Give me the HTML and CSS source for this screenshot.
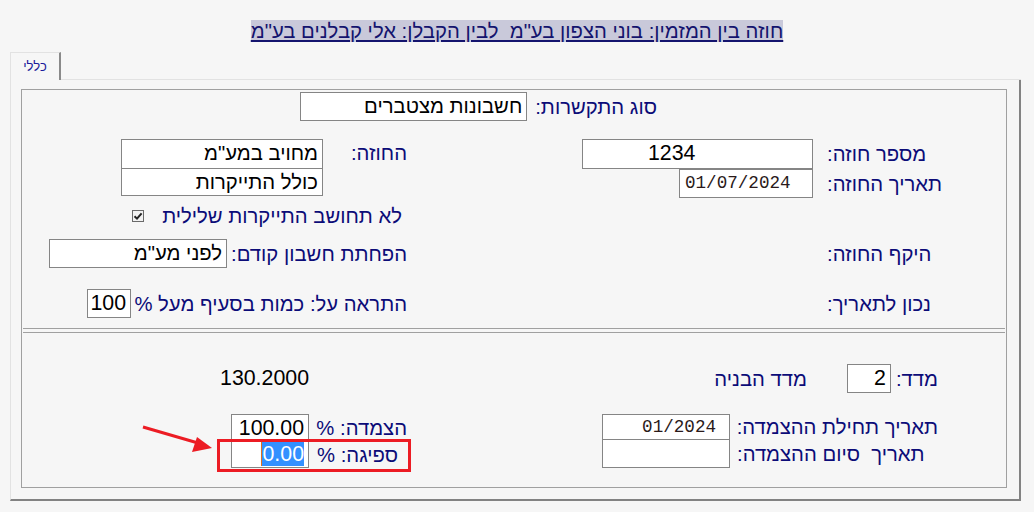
FILE: index.html
```html
<!DOCTYPE html>
<html lang="he">

<head>
    <meta charset="utf-8">
    <link rel="stylesheet" href="styles.css">
    <title>חוזה</title>
</head>

<body>
    <h1 class="title" dir="rtl"><a href="#">חוזה בין המזמין: בוני הצפון בע"מ &nbsp;לבין הקבלן: אלי קבלנים בע"מ</a></h1>

    <div class="window">
        <div class="tabstrip">
            <span class="tab" dir="rtl">כללי</span>
            <span class="tab-rest"></span>
        </div>
        <div class="frame">
            <div class="inner" dir="rtl">
                <!-- top: contract type -->
                <div class="row row-type">
                    <span class="lbl">סוג התקשרות:</span>
                    <div class="field w-type">חשבונות מצטברים</div>
                </div>

                <div class="row row-contract">
                    <div class="half half-r">
                        <div class="pair">
                            <span class="lbl col-r">מספר חוזה:</span>
                            <div class="field num w-num">1234</div>
                        </div>
                        <div class="pair">
                            <span class="lbl col-r">תאריך החוזה:</span>
                            <div class="field mono w-date">01/07/2024</div>
                        </div>
                    </div>
                    <div class="half half-l">
                        <span class="lbl col-contractor">החוזה:</span>
                        <div class="stack w-contractor">
                            <div class="field first">מחויב במע"מ</div>
                            <div class="field second">כולל התייקרות</div>
                        </div>
                    </div>
                </div>

                <div class="row row-check">
                    <span class="lbl">לא תחושב התייקרות שלילית</span>
                    <span class="checkbox">
                        <svg width="10" height="10" viewBox="0 0 10 10"><path d="M1.5 5.2 L4 7.6 L8.6 2.4" fill="none" stroke="#222" stroke-width="2"/></svg>
                    </span>
                </div>

                <div class="row row-scope">
                    <div class="half half-r">
                        <span class="lbl col-r">היקף החוזה:</span>
                    </div>
                    <div class="half half-l">
                        <span class="lbl col-prev">הפחתת חשבון קודם:</span>
                        <div class="field w-prev">לפני מע"מ</div>
                    </div>
                </div>

                <div class="row row-alert">
                    <div class="half half-r">
                        <span class="lbl col-r">נכון לתאריך:</span>
                    </div>
                    <div class="half half-l">
                        <span class="lbl col-alert">התראה על: כמות בסעיף מעל %</span>
                        <div class="field num w-small">100</div>
                    </div>
                </div>

                <div class="sep"></div>

                <!-- index section -->
                <div class="row row-index">
                    <div class="half half-r idx">
                        <span class="lbl">מדד:</span>
                        <div class="field num w-small">2</div>
                        <span class="lbl idx-name">מדד הבניה</span>
                    </div>
                    <div class="half half-l base">
                        <span class="value">130.2000</span>
                    </div>
                </div>

                <div class="row row-link">
                    <div class="half half-r idx">
                        <div class="grid-dates">
                            <span class="lbl">תאריך תחילת ההצמדה:</span>
                            <div class="field mono d1">01/2024</div>
                            <span class="lbl">תאריך&nbsp; סיום ההצמדה:</span>
                            <div class="field d2"></div>
                        </div>
                    </div>
                    <div class="half half-l">
                        <div class="grid-pct">
                            <span class="lbl">הצמדה: %</span>
                            <div class="field num p1">100.00</div>
                            <span class="lbl">ספיגה: %</span>
                            <div class="field num p2"><span class="sel">0.00</span></div>
                        </div>
                    </div>
                </div>
            </div>
        </div>
    </div>

    <!-- annotation drawn over the screenshot -->
    <svg class="marks" width="1034" height="512" viewBox="0 0 1034 512">
        <rect x="218.5" y="440.5" width="191" height="30" fill="none" stroke="#ec1c24" stroke-width="3"/>
        <line x1="143" y1="427" x2="198" y2="443" stroke="#ec1c24" stroke-width="3"/>
        <path d="M212 448 L192 452 L197 437 Z" fill="#ec1c24"/>
    </svg>
</body>

</html>
```

FILE: styles.css
```css
body {
    margin: 0;
    background: #f6f6f6;
    font-family: "Liberation Sans", Arial, sans-serif;
    color: #0c0c78;
}

.title {
    margin: 20px 0 0;
    text-align: center;
    font-size: 20.3px;
    font-weight: normal;
    line-height: 23px;
}

.title a {
    color: #14146e;
    background: #c9c9da;
}

.window {
    margin: 9px 0 0 10px;
    width: 1011px;
}

.tabstrip {
    display: flex;
    height: 28px;
}

.tab {
    width: 48px;
    border-left: 1px solid #e2e2e2;
    border-top: 1px solid #e2e2e2;
    border-right: 2px solid #8a8a8a;
    font-size: 13px;
    color: #1a1a9a;
    text-align: center;
    line-height: 27px;
}

.tab-rest {
    flex: 1;
    border-bottom: 1px solid #e2e2e2;
}

.frame {
    border-left: 1px solid #e2e2e2;
    border-right: 2px solid #828282;
    border-bottom: 2px solid #828282;
    padding: 9px 12px 11px 10px;
}

.inner {
    box-sizing: border-box;
    width: 986px;
    height: 399px;
    border: 1px solid #a0a0a0;
}

.lbl {
    font-size: 20.3px;
    line-height: 24px;
    white-space: nowrap;
}

.field {
    box-sizing: border-box;
    height: 29px;
    background: #fff;
    border: 1px solid #858585;
    color: #000;
    font-size: 20.3px;
    line-height: 27px;
    padding: 0 4px;
    white-space: nowrap;
    overflow: hidden;
}

.field.num {
    font-size: 21.33px;
    text-align: right;
}

.field.mono {
    font-family: "Liberation Mono", "Courier New", monospace;
    font-size: 17.6px;
    color: #2a1a1a;
    direction: ltr;
    text-align: right;
    padding: 0 13px;
}

.row {
    display: flex;
    align-items: center;
}

.half {
    display: flex;
    align-items: flex-start;
}

.half-r {
    width: 486px;
    box-sizing: border-box;
    padding-right: 46px;
}

.half-l {
    width: 498px;
    box-sizing: border-box;
    padding-right: 113px;
}

/* top row */
.row-type {
    margin-top: 2px;
    padding-right: 349px;
    gap: 8px;
}

.w-type {
    width: 227px;
}

/* contract number / contractor */
.row-contract {
    margin-top: 18px;
    align-items: flex-start;
}

.row-contract .half-r {
    flex-direction: column;
}

.pair {
    display: flex;
    align-items: center;
    gap: 14px;
}

.col-r {
    width: 133px;
    text-align: left;
}

.w-num {
    width: 231px;
    height: 30px;
    direction: ltr;
    text-align: left !important;
    padding-left: 65px;
}

.w-date {
    width: 134px;
    text-align: left !important;
    padding: 0 5px !important;
}

.col-contractor {
    width: 84px;
    line-height: 28px;
}

.w-contractor {
    width: 202px;
}

.stack .first {
    height: 30px;
}

.stack .second {
    height: 28px;
    margin-top: -1px;
}

/* checkbox */
.row-check {
    margin-top: 6px;
    padding-right: 604px;
    gap: 18px;
}

.checkbox {
    box-sizing: border-box;
    width: 12px;
    height: 12px;
    border: 1px solid #6a6a6a;
    background: #f2f2f2;
    display: flex;
}

.row-scope {
    margin-top: 11px;
}

.row-scope .half,
.row-alert .half {
    align-items: center;
}

.col-prev {
    width: 180px;
}

.w-prev {
    width: 178px;
}

.row-alert {
    margin-top: 21px;
}

.col-alert {
    width: 276px;
}

.w-small {
    width: 44px;
}

.sep {
    margin: 10px 1px 0;
    height: 3px;
    border-top: 1px solid #a0a0a0;
    border-bottom: 1px solid #a0a0a0;
}

/* index section */
.row-index {
    margin-top: 31px;
}

.idx {
    padding-right: 68px;
    align-items: center;
}

.idx > .field {
    margin-right: 5px;
}

.idx-name {
    margin-right: 40px;
}

.base {
    padding-right: 211px;
}

.value {
    color: #000;
    font-size: 21.33px;
    direction: ltr;
}

.row-link {
    margin-top: 21px;
    align-items: flex-start;
}

.grid-dates {
    display: grid;
    grid-template-columns: 201px 128px;
    column-gap: 7px;
    align-items: center;
}

.grid-dates .lbl,
.grid-pct .lbl {
    text-align: left;
}

.grid-dates .d1 {
    height: 26px;
    line-height: 24px;
}

.grid-dates .d2 {
    height: 29px;
    margin-top: -1px;
}

.grid-pct {
    display: grid;
    grid-template-columns: 90px 78px;
    column-gap: 8px;
    align-items: center;
}

.grid-pct .p1 {
    height: 27px;
    line-height: 26px;
}

.grid-pct .p2 {
    height: 28px;
    margin-top: -1px;
    line-height: 24px;
    padding-top: 1px;
}

.sel {
    background: #3390ff;
    color: #fff;
    border-left: 1px solid #e07020;
}

.marks {
    position: absolute;
    left: 0;
    top: 0;
    pointer-events: none;
}
```
